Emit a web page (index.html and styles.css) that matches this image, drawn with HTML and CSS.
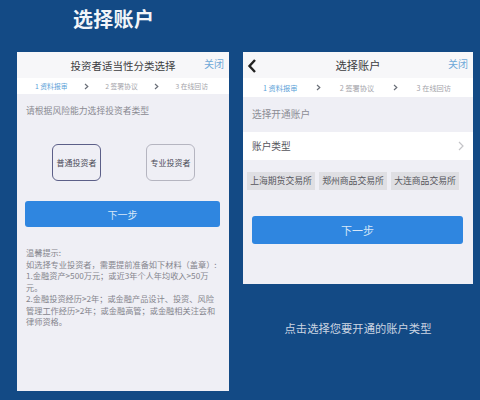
FILE: index.html
```html
<!DOCTYPE html>
<html lang="zh">
<head>
<meta charset="utf-8">
<title>选择账户</title>
<link rel="stylesheet" href="styles.css">
</head>
<body>
<h1 class="title">选择账户</h1>
<main class="columns">
  <section class="phone phone-left">
    <header class="nav">
      <span class="nav-title">投资者适当性分类选择</span>
      <span class="close">关闭</span>
    </header>
    <div class="steps steps-left">
      <span class="step active">1 资料报审</span>
      <svg class="chev" width="5" height="7" viewBox="0 0 5 7"><path d="M1 1 L3.8 3.5 L1 6" fill="none" stroke="#6a6f78" stroke-width="1.2"/></svg>
      <span class="step">2 签署协议</span>
      <svg class="chev" width="5" height="7" viewBox="0 0 5 7"><path d="M1 1 L3.8 3.5 L1 6" fill="none" stroke="#6a6f78" stroke-width="1.2"/></svg>
      <span class="step">3 在线回访</span>
    </div>
    <p class="prompt">请根据风险能力选择投资者类型</p>
    <div class="choices">
      <div class="choice selected">普通投资者</div>
      <div class="choice">专业投资者</div>
    </div>
    <button class="next next-left">下一步</button>
    <div class="tips">
      <p>温馨提示:</p>
      <p>如选择专业投资者，需要提前准备如下材料（盖章）:</p>
      <p>1.金融资产&gt;500万元；或近3年个人年均收入&gt;50万元。</p>
      <p>2.金融投资经历&gt;2年；或金融产品设计、投资、风险管理工作经历&gt;2年；或金融高管；或金融相关注会和律师资格。</p>
    </div>
  </section>
  <div class="right-col">
    <section class="phone phone-right">
      <header class="nav">
        <svg class="back" width="10" height="16" viewBox="0 0 10 16"><path d="M8 2 L2.5 8 L8 14" fill="none" stroke="#222" stroke-width="2.4"/></svg>
        <span class="nav-title">选择账户</span>
        <span class="close">关闭</span>
      </header>
      <div class="steps steps-right">
        <span class="step active">1 资料报审</span>
        <svg class="chev" width="5" height="7" viewBox="0 0 5 7"><path d="M1 1 L3.8 3.5 L1 6" fill="none" stroke="#6a6f78" stroke-width="1.2"/></svg>
        <span class="step">2 签署协议</span>
        <svg class="chev" width="5" height="7" viewBox="0 0 5 7"><path d="M1 1 L3.8 3.5 L1 6" fill="none" stroke="#6a6f78" stroke-width="1.2"/></svg>
        <span class="step">3 在线回访</span>
      </div>
      <p class="section-label">选择开通账户</p>
      <div class="row">
        <span>账户类型</span>
        <svg width="6" height="10" viewBox="0 0 6 10"><path d="M1 1 L5 5 L1 9" fill="none" stroke="#c4c4c8" stroke-width="1.2"/></svg>
      </div>
      <div class="tags">
        <span class="tag">上海期货交易所</span>
        <span class="tag">郑州商品交易所</span>
        <span class="tag">大连商品交易所</span>
      </div>
      <button class="next next-right">下一步</button>
    </section>
    <p class="caption">点击选择您要开通的账户类型</p>
  </div>
</main>
</body>
</html>
```

FILE: styles.css
```css
* { box-sizing: border-box; }
html, body { margin: 0; height: 400px; overflow: hidden; }
body {
  background: #134a85;
  font-family: "Noto Sans CJK SC", "Liberation Sans", sans-serif;
}
.title {
  margin: 0;
  height: 52px;
  padding: 6px 0 0 73px;
  font-size: 20px;
  line-height: 26px;
  font-weight: 700;
  color: #f2f5f9;
  letter-spacing: 0.3px;
}
.columns { display: flex; align-items: flex-start; gap: 14px; padding-left: 17px; }
.phone { background: #efeff5; }
.phone-left { width: 212px; height: 339px; }
.right-col { width: 230px; }
.phone-right { height: 232px; }
.nav {
  height: 26px;
  background: #f7f7f9;
  display: flex;
  align-items: center;
  justify-content: center;
  position: relative;
}
.nav-title { font-size: 10.5px; color: #3c3c40; }
.phone-right .nav-title { font-size: 11.2px; }
.close { position: absolute; right: 5px; top: 4px; font-size: 10px; line-height: 16px; color: #6fa9d8; }
.back { position: absolute; left: 4px; top: 6px; }
.steps {
  background: #fff;
  display: flex;
  align-items: center;
  justify-content: space-between;
  font-size: 6.8px;
  color: #a4a4aa;
}
.steps-left { height: 16px; padding: 0 21px 0 18px; }
.steps-right { height: 19px; padding: 0 22px 0 20px; font-size: 7.2px; }
.step { white-space: nowrap; }
.step.active { color: #5b9fd8; }
.prompt { margin: 0; padding: 9px 0 0 9px; font-size: 8.8px; line-height: 16px; color: #8a8a92; }
.choices { display: flex; gap: 45px; padding: 25px 0 0 35px; }
.choice {
  width: 49px;
  height: 37px;
  display: flex;
  align-items: center;
  justify-content: center;
  border: 1px solid #b5b5c0;
  border-radius: 6px;
  font-size: 8px;
  color: #4a4a55;
  white-space: nowrap;
}
.choice.selected { border-color: #5c5f88; }
.next {
  display: block;
  border: 0;
  padding: 0;
  background: #2f86e0;
  color: #d7e8f8;
  border-radius: 3px;
  font-family: inherit;
  font-size: 10px;
}
.next-left { width: 195px; height: 26px; margin: 20px 0 0 8px; }
.next-right { width: 211px; height: 28px; margin: 26px 0 0 9px; font-size: 11px; }
.tips { padding: 20px 9px 0 9px; font-size: 8.2px; line-height: 11.5px; color: #85858d; }
.tips p { margin: 0; }
.section-label { margin: 0; height: 35px; padding-left: 9px; font-size: 9.7px; line-height: 35px; color: #8c8c94; }
.row {
  height: 28px;
  background: #fff;
  display: flex;
  align-items: center;
  justify-content: space-between;
  padding: 0 9px;
  font-size: 9.7px;
  color: #55555c;
}
.tags { display: flex; gap: 4px; padding: 12px 0 0 4px; }
.tag {
  width: 68px;
  height: 18px;
  background: #dfdfe3;
  font-size: 8.8px;
  line-height: 18px;
  text-align: center;
  color: #56565c;
  white-space: nowrap;
}
.caption {
  margin: 36px 0 0;
  text-align: center;
  font-size: 11.3px;
  line-height: 16px;
  color: #ccd5e2;
}
```
